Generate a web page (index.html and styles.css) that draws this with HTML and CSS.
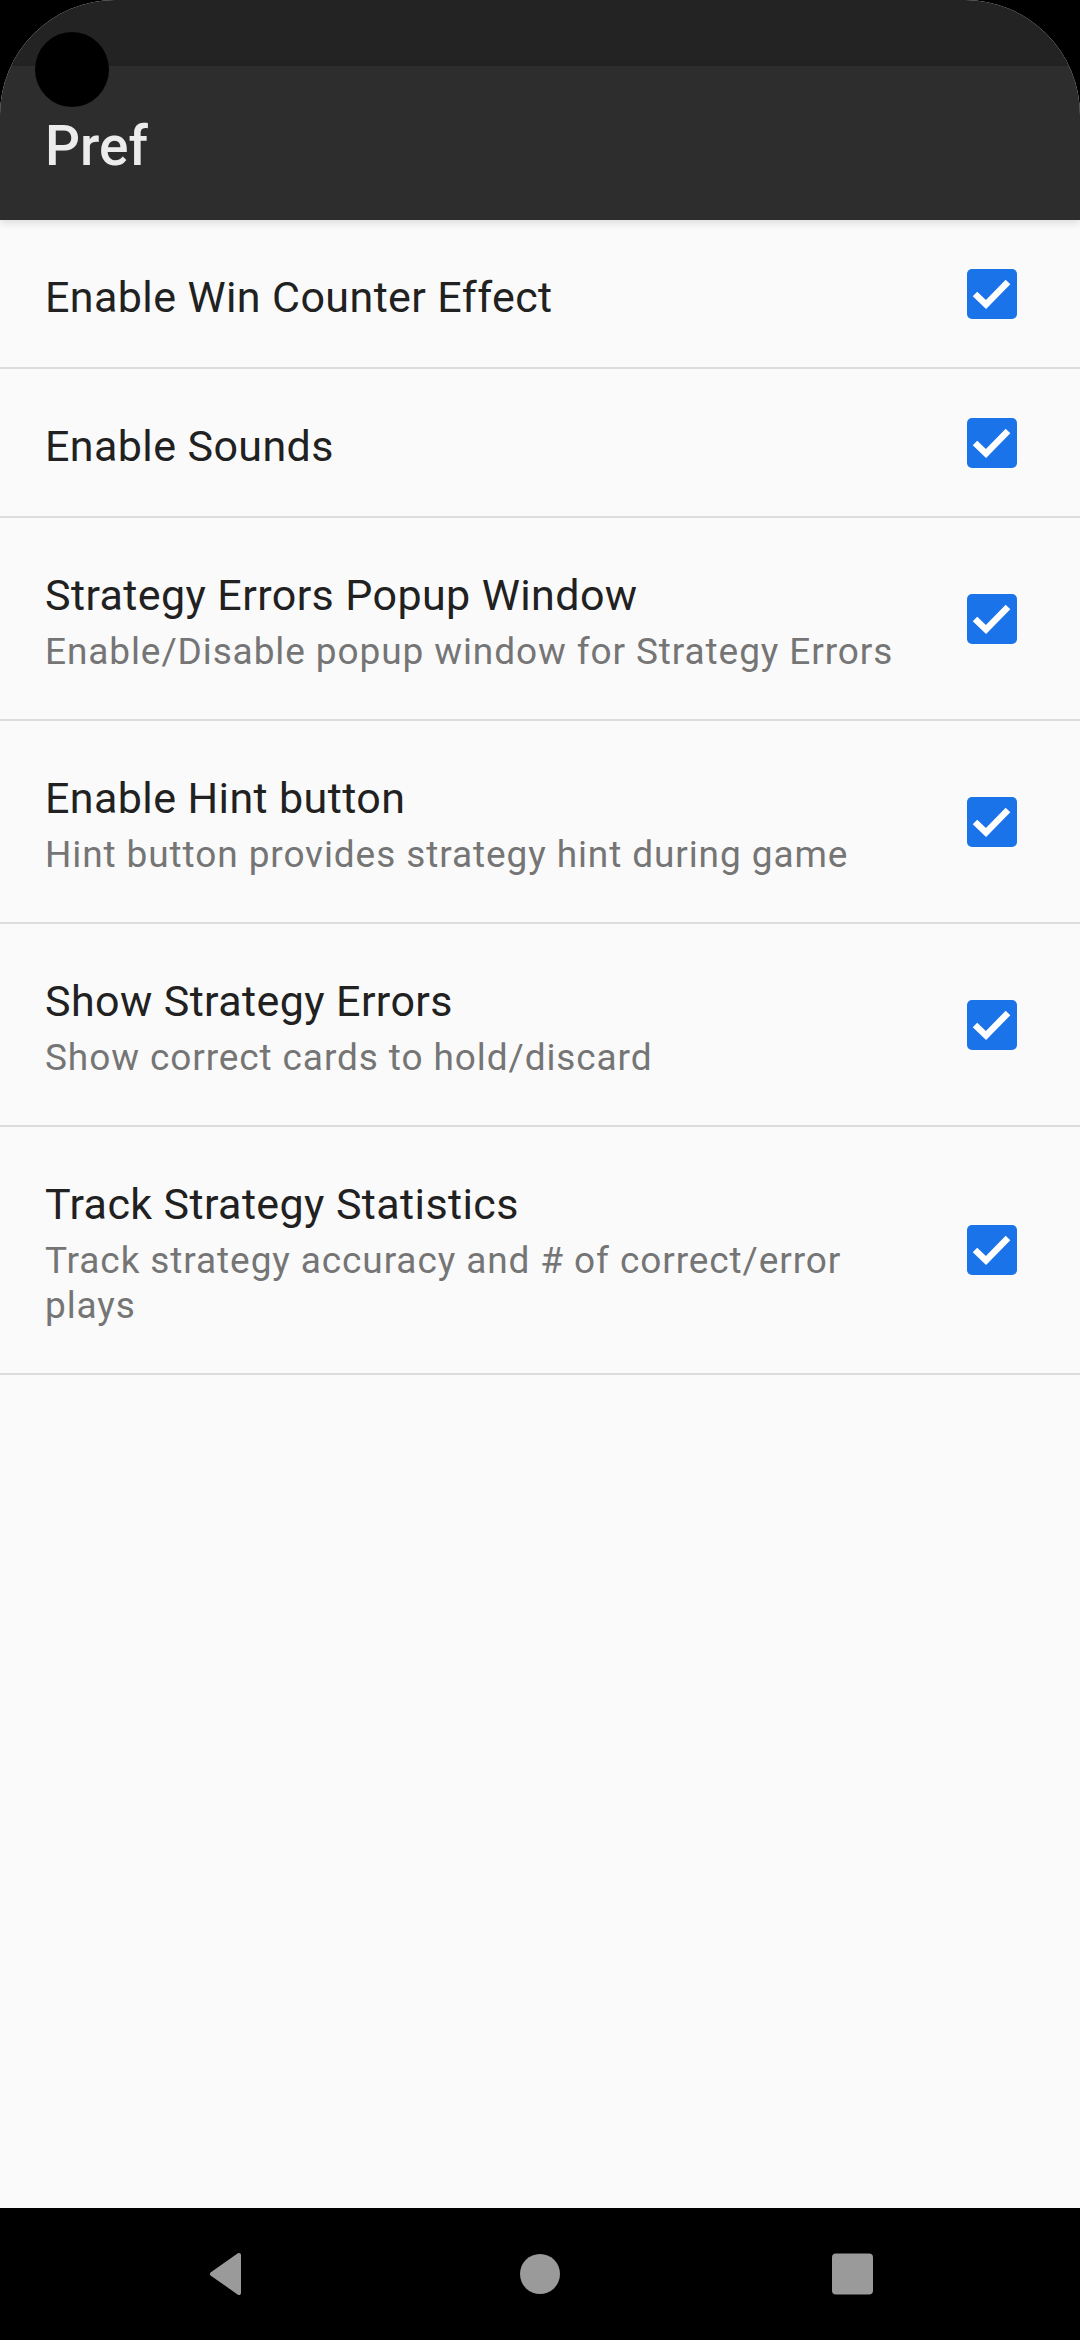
FILE: index.html
```html
<!DOCTYPE html>
<html lang="en">
<head>
    <meta charset="UTF-8">
    <meta name="viewport" content="width=device-width, initial-scale=1.0">
    <title>Pref</title>
    <link rel="stylesheet" href="styles.css">
</head>
<body>
    <div class="pantalla">
        <div class="status">
            <div class="camara"></div>
        </div>
        <div class="appbar">Pref</div>

        <div class="lista">
            <div class="fila">
                <div class="textos">
                    <div class="titulo">Enable Win Counter Effect</div>
                </div>
                <svg class="check" viewBox="0 0 50 50"><rect width="50" height="50" rx="5"/><polyline points="8,25 19,35.5 41,13"/></svg>
            </div>
            <div class="fila">
                <div class="textos">
                    <div class="titulo">Enable Sounds</div>
                </div>
                <svg class="check" viewBox="0 0 50 50"><rect width="50" height="50" rx="5"/><polyline points="8,25 19,35.5 41,13"/></svg>
            </div>
            <div class="fila">
                <div class="textos">
                    <div class="titulo">Strategy Errors Popup Window</div>
                    <div class="resumen">Enable/Disable popup window for Strategy Errors</div>
                </div>
                <svg class="check" viewBox="0 0 50 50"><rect width="50" height="50" rx="5"/><polyline points="8,25 19,35.5 41,13"/></svg>
            </div>
            <div class="fila">
                <div class="textos">
                    <div class="titulo">Enable Hint button</div>
                    <div class="resumen">Hint button provides strategy hint during game</div>
                </div>
                <svg class="check" viewBox="0 0 50 50"><rect width="50" height="50" rx="5"/><polyline points="8,25 19,35.5 41,13"/></svg>
            </div>
            <div class="fila">
                <div class="textos">
                    <div class="titulo">Show Strategy Errors</div>
                    <div class="resumen">Show correct cards to hold/discard</div>
                </div>
                <svg class="check" viewBox="0 0 50 50"><rect width="50" height="50" rx="5"/><polyline points="8,25 19,35.5 41,13"/></svg>
            </div>
            <div class="fila">
                <div class="textos">
                    <div class="titulo">Track Strategy Statistics</div>
                    <div class="resumen">Track strategy accuracy and # of correct/error plays</div>
                </div>
                <svg class="check" viewBox="0 0 50 50"><rect width="50" height="50" rx="5"/><polyline points="8,25 19,35.5 41,13"/></svg>
            </div>
        </div>
    </div>

    <div class="navbar">
        <svg class="nav-icono" viewBox="0 0 60 50"><path d="M41 6 L14 25 L41 44 Z"/></svg>
        <svg class="nav-icono" viewBox="0 0 60 50"><circle cx="30" cy="25" r="20"/></svg>
        <svg class="nav-icono" viewBox="0 0 60 50"><rect x="10" y="4.5" width="41" height="41" rx="4"/></svg>
    </div>
</body>
</html>
```

FILE: styles.css
```css
body { margin: 0; background: #000; font-family: Roboto, "Noto Sans", sans-serif; }
.pantalla {
    height: 2208px;
    background: #fafafa;
    border-radius: 115px 115px 0 0;
    overflow: hidden;
    display: flex;
    flex-direction: column;
}
.status { height: 66px; background: #232323; position: relative; flex-shrink: 0; }
.camara {
    position: absolute;
    left: 35px;
    top: 32px;
    width: 74px;
    height: 75px;
    border-radius: 50%;
    background: #000;
    z-index: 2;
}
.appbar {
    height: 148px;
    padding-top: 6px;
    flex-shrink: 0;
    background: #2d2d2d;
    color: #ececec;
    font-size: 55px;
    font-weight: 500;
    padding-left: 45px;
    display: flex;
    align-items: center;
    box-shadow: 0 3px 8px rgba(0, 0, 0, 0.12);
    position: relative;
    z-index: 1;
}
.fila {
    display: flex;
    align-items: center;
    padding: 0 63px 0 45px;
    border-bottom: 2px solid #dcdcdc;
}
.textos { flex: 1; padding: 52px 0 45px; }
.titulo { font-size: 43px; line-height: 50px; color: #212121; letter-spacing: 0.4px; }
.resumen { font-size: 37px; line-height: 45px; color: #757575; margin-top: 9px; letter-spacing: 0.9px; }
.check { width: 50px; height: 50px; margin-left: 52px; flex-shrink: 0; }
.check rect { fill: #1a73e8; }
.check polyline { fill: none; stroke: #fff; stroke-width: 6.5; }
.navbar {
    height: 132px;
    background: #000;
    display: flex;
    justify-content: center;
    align-items: center;
    gap: 252px;
}
.nav-icono { width: 60px; height: 50px; }
.nav-icono path { fill: #9a9a9a; stroke: #9a9a9a; stroke-width: 4; stroke-linejoin: round; }
.nav-icono circle, .nav-icono rect { fill: #9a9a9a; }
```
